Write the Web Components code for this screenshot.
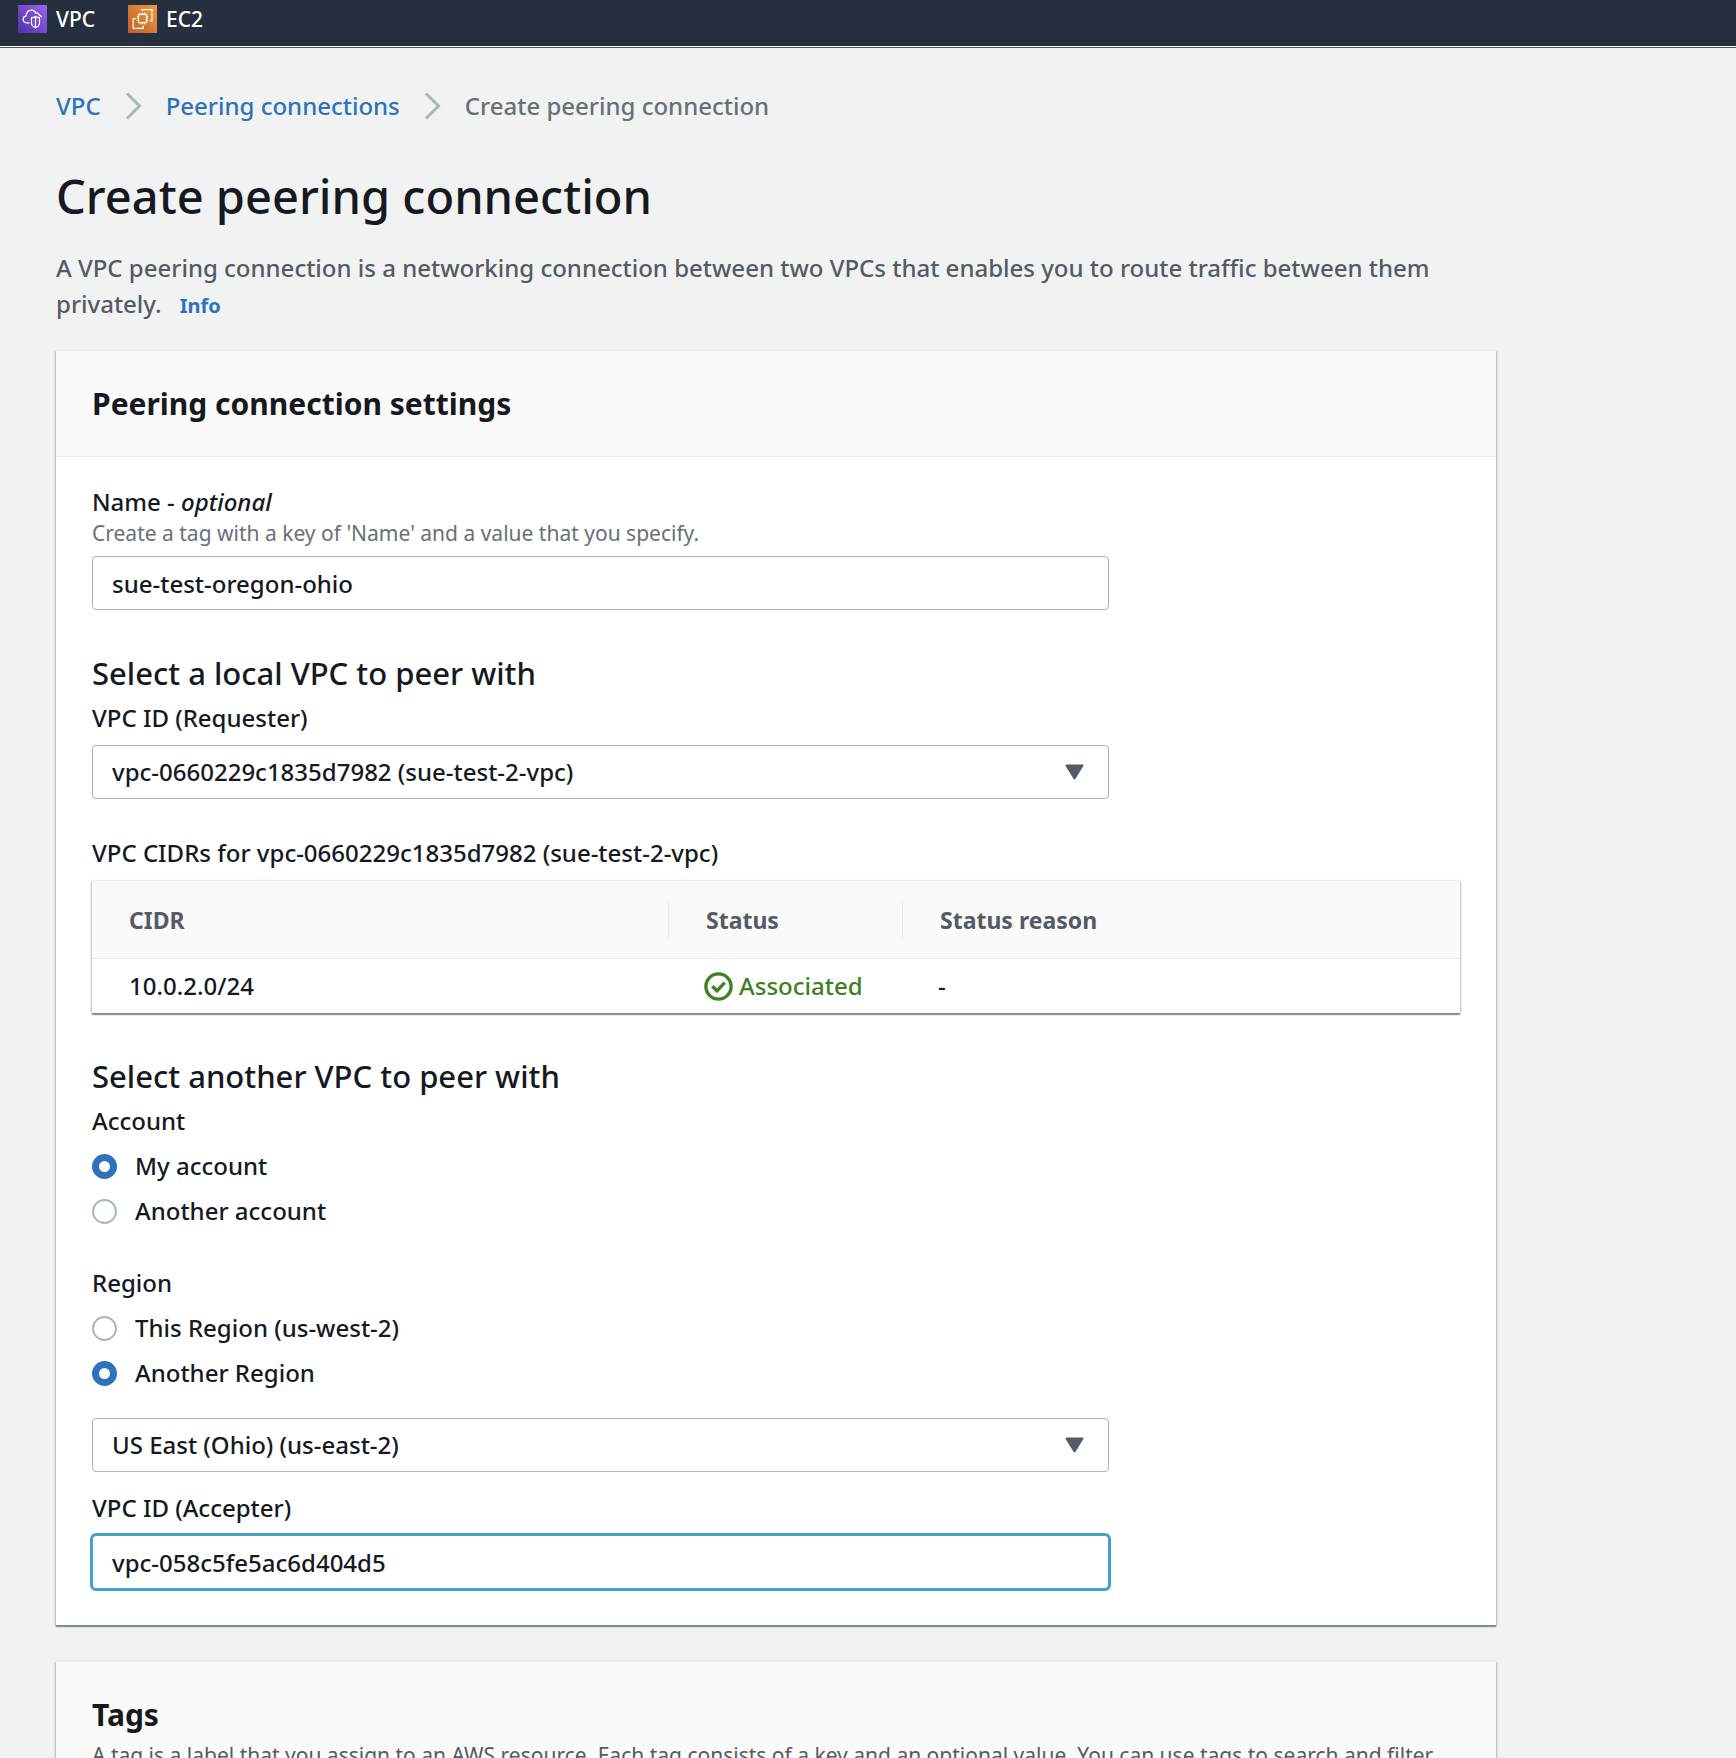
<!DOCTYPE html>
<html lang="en">
<head>
<meta charset="utf-8">
<meta name="viewport" content="width=device-width, initial-scale=1">
<title>Create peering connection</title>
<style>
  :root {
    --text: #16191f;
    --text-secondary: #545b64;
    --text-hint: #687078;
    --link: #2f72ba;
    --line: #eaeded;
    --control-border: #aab7b8;
    --surface: #ffffff;
    --surface-header: #fafafa;
    --success: #3e8022;
    --focus: #459fc6;
    --card-shadow: 0 2px 1px rgba(0, 28, 36, .34), 1px 1px 2px rgba(0, 28, 36, .22), -1px 1px 2px rgba(0, 28, 36, .22);
  }
  html { background: #f1f3f3; }
  body {
    margin: 0;
    color: var(--text);
    font: 500 24px/36px "Noto Sans", "Open Sans", sans-serif;
  }
</style>
</head>
<body>
<peering-page></peering-page>

<script>
const define = (name, html, setup) => {
  const template = document.createElement('template');
  template.innerHTML = html;
  customElements.define(name, class extends HTMLElement {
    connectedCallback() {
      if (this.shadowRoot) return;
      const root = this.attachShadow({ mode: 'open' });
      root.append(template.content.cloneNode(true));
      if (setup) setup(this, root);
    }
  });
};

define('service-link', `
<style>
  :host { display: block; }
  a { display: flex; align-items: center; gap: 9px; color: #fff; text-decoration: none; font-size: 21px; line-height: 28px; }
  ::slotted(svg) { display: block; }
</style>
<a href="#"><slot name="icon"></slot><span><slot></slot></span></a>`);

define('service-bar', `
<style>
  :host { display: block; background: #262f3e; border-bottom: 1px solid #50565f; }
  nav { display: flex; gap: 33px; padding: 5px 18px 13px; border-bottom: 1px solid #fff; }
</style>
<nav aria-label="Favorites"><slot></slot></nav>`);

define('bread-crumbs', `
<style>
  :host { display: block; }
  ol { display: flex; align-items: center; gap: 24px; list-style: none; margin: 0; padding: 0; }
  li { display: flex; align-items: center; gap: 24px; }
  a { color: var(--link); text-decoration: none; }
  .current { color: var(--text-hint); }
  svg { display: block; }
</style>
<ol></ol>`, (host, root) => {
  const items = host.getAttribute('items').split('|');
  root.querySelector('ol').innerHTML = items.map((t, i) => i < items.length - 1
    ? `<li><a href="#">${t}</a><svg width="17" height="28" viewBox="0 0 17 28" fill="none" stroke="#aab7b8" stroke-width="3" aria-hidden="true"><path d="M2 1.5 14.5 14 2 26.5"/></svg></li>`
    : `<li class="current" aria-current="page">${t}</li>`).join('');
});

define('page-header', `
<style>
  :host { display: block; }
  h1 { margin: 0 0 24px; font-size: 47px; line-height: 60px; font-weight: 500; }
  p { margin: 0; color: var(--text-secondary); }
  a { display: inline-block; margin-left: 12px; color: var(--link); font-size: 20px; line-height: 28px; font-weight: 700; text-decoration: none; }
</style>
<h1><slot name="title"></slot></h1>
<p><slot></slot> <a href="#">Info</a></p>`);

define('panel-card', `
<style>
  :host { display: block; background: var(--surface); border-top: 1px solid var(--line); box-shadow: var(--card-shadow); }
  header { padding: 33px 36px 32px; background: var(--surface-header); border-bottom: 1px solid var(--line); }
  h2 { margin: 0; font-size: 30px; line-height: 40px; font-weight: 700; }
  ::slotted([slot="description"]) { margin: 6px 0 0; color: var(--text-secondary); font-size: 21px; line-height: 28px; font-weight: 400; }
  .body { padding: 27px 36px 36px; }
</style>
<section>
  <header><h2><slot name="title"></slot></h2><slot name="description"></slot></header>
  <div class="body"><slot></slot></div>
</section>`);

define('section-heading', `
<style>
  :host { display: block; }
  h3 { margin: 0; font-size: 31px; line-height: 36px; font-weight: 500; }
</style>
<h3><slot></slot></h3>`);

define('text-field', `
<style>
  :host { display: block; width: calc(75% - 9px); }
  label { display: block; }
  .hint { color: var(--text-hint); font-size: 21px; line-height: 27px; font-weight: 400; }
  .hint:empty { display: none; }
  input { display: block; box-sizing: border-box; width: 100%; height: 54px; margin: 9px 0 0; padding: 0 19px; border: 1px solid var(--control-border); border-radius: 4px; background: #fff; color: inherit; font: inherit; outline: none; }
  :host([active]) input { border-color: var(--focus); box-shadow: 0 0 0 2px var(--focus); }
</style>
<label for="field"><slot name="label"></slot></label>
<div class="hint" id="hint"></div>
<input id="field" type="text" aria-describedby="hint">`, (host, root) => {
  root.querySelector('.hint').textContent = host.getAttribute('hint') || '';
  root.querySelector('input').value = host.getAttribute('value') || '';
});

define('select-field', `
<style>
  :host { display: block; width: calc(75% - 9px); }
  label { display: block; margin-bottom: 9px; }
  .box { display: grid; align-items: center; }
  select, svg { grid-area: 1 / 1; }
  select { appearance: none; box-sizing: border-box; width: 100%; height: 54px; margin: 0; padding: 0 60px 0 19px; border: 1px solid var(--control-border); border-radius: 4px; background: #fff; color: inherit; font: inherit; }
  svg { justify-self: end; margin-right: 25px; pointer-events: none; }
</style>
<label for="field"></label>
<div class="box">
  <select id="field"><option></option></select>
  <svg width="19" height="16" viewBox="0 0 19 16" aria-hidden="true"><path d="M1.5 1.5h16l-8 13z" fill="#545b64" stroke="#545b64" stroke-width="2" stroke-linejoin="round"/></svg>
</div>`, (host, root) => {
  const label = root.querySelector('label');
  if (host.hasAttribute('label')) label.textContent = host.getAttribute('label');
  else { label.remove(); root.querySelector('select').setAttribute('aria-label', host.getAttribute('name')); }
  root.querySelector('option').textContent = host.getAttribute('value');
});

define('radio-group', `
<style>
  :host { display: block; }
  fieldset { margin: 0; padding: 0; border: 0; min-width: 0; }
  legend { padding: 0; }
  .choice { display: flex; align-items: center; gap: 18px; margin-top: 9px; }
  input { appearance: none; box-sizing: border-box; flex: none; width: 25px; height: 25px; margin: 0; border: 2px solid var(--control-border); border-radius: 50%; background: #fff; }
  input:checked { border: 7px solid var(--link); }
</style>
<fieldset><legend></legend></fieldset>`, (host, root) => {
  const selected = Number(host.getAttribute('selected'));
  root.querySelector('legend').textContent = host.getAttribute('label');
  root.querySelector('fieldset').insertAdjacentHTML('beforeend',
    host.getAttribute('options').split('|').map((t, i) =>
      `<div class="choice"><input type="radio" name="choice" id="choice${i}"${i === selected ? ' checked' : ''}><label for="choice${i}">${t}</label></div>`).join(''));
});

define('status-label', `
<style>
  :host { display: flex; align-items: center; gap: 6px; color: var(--success); }
</style>
<svg width="29" height="29" viewBox="0 0 29 29" fill="none" stroke="currentColor" stroke-width="3.4" aria-hidden="true"><circle cx="14.5" cy="14.5" r="12.6"/><path d="M8.3 14.3 13 18.8 20.7 10.6"/></svg>
<span><slot></slot></span>`);

define('cidr-table', `
<style>
  :host { display: block; }
  table { width: 100%; table-layout: fixed; border-collapse: separate; border-spacing: 0; border-top: 1px solid var(--line); box-shadow: var(--card-shadow); }
  caption { padding-bottom: 9px; text-align: left; }
  th, td { padding: 0 0 0 37px; text-align: left; }
  th { height: 77px; background: var(--surface-header); border-bottom: 1px solid var(--line); color: var(--text-secondary); font-weight: 700; font-size: 23px; }
  th div { border-right: 1px solid var(--line); }
  th:last-child div { border: 0; }
  td { height: 54px; padding-left: 35px; background: var(--surface); }
  td:first-child { padding-left: 37px; }
  th:first-child { width: 540px; }
  th:nth-child(2) { width: 197px; }
</style>
<table>
  <caption><slot></slot></caption>
  <thead><tr><th scope="col"><div>CIDR</div></th><th scope="col"><div>Status</div></th><th scope="col"><div>Status reason</div></th></tr></thead>
  <tbody><tr><td>10.0.2.0/24</td><td><status-label>Associated</status-label></td><td>-</td></tr></tbody>
</table>`);

define('peering-page', `
<style>
  :host { display: block; height: 100vh; overflow: hidden; }
  main { max-width: 1440px; padding: 40px 56px; }
  page-header { margin: 42px 0 28px; }
  .form { display: flex; flex-direction: column; }
  section-heading { margin: 45px 0 9px; }
  cidr-table, .region { margin-top: 36px; }
  .region-select { margin-top: 27px; }
  .accepter { margin-top: 18px; }
  panel-card + panel-card { margin-top: 36px; }
</style>
<service-bar>
  <service-link>
    <svg slot="icon" width="29" height="28" viewBox="0 0 29 28" aria-hidden="true">
      <defs><linearGradient id="vpc" x1="0" y1="1" x2="1" y2="0"><stop stop-color="#4f2fa8"/><stop offset="1" stop-color="#9a66f0"/></linearGradient></defs>
      <rect width="29" height="28" fill="url(#vpc)"/>
      <g fill="none" stroke="#fff" stroke-width="1.2" stroke-linejoin="round">
        <path d="M11.500 17.800H8.600C6.600 17.800 5.200 16.300 5.200 14.300c0-2 1.300-3.200 3-3.500C8.100 7.500 10.300 5.200 13.300 5.200c2.400 0 4 1.300 4.800 3.300 1.500-.9 3.200 0 3.300 1.900 1.100.3 1.900.8 2.300 1.600"/>
        <path d="M17.500 11.500c1.100.9 2.400 1.200 4 1.200v5.400c0 2.200-1.500 3.700-4 4.600-2.500-.9-4-2.400-4-4.600v-5.400c1.600 0 2.900-.3 4-1.200zM17.500 11.500v11.200"/>
      </g>
    </svg>VPC</service-link>
  <service-link>
    <svg slot="icon" width="29" height="28" viewBox="0 0 29 28" aria-hidden="true">
      <defs><linearGradient id="ec2" x1="0" y1="1" x2="1" y2="0"><stop stop-color="#c0602e"/><stop offset="1" stop-color="#ef9a3a"/></linearGradient></defs>
      <rect width="29" height="28" fill="url(#ec2)"/>
      <g fill="none" stroke="#fff" stroke-width="1.200">
        <rect x="10.500" y="9.500" width="8" height="8"/>
        <path d="M12.500 9.500V7.800M14.500 9.500V7.800M16.500 9.500V7.800M12.500 19.200v-1.700M14.500 19.200v-1.700M16.500 19.200v-1.700M10.500 11.500H8.800M10.500 13.500H8.800M10.500 15.500H8.800M18.500 11.500h1.700M18.500 13.500h1.700M18.500 15.500h1.700"/>
        <path d="M14 6V4.600h10v11.200h-2M8 13.500H5.200v9.800h10V20.800"/>
      </g>
    </svg>EC2</service-link>
</service-bar>
<main>
  <bread-crumbs items="VPC|Peering connections|Create peering connection"></bread-crumbs>
  <page-header><span slot="title">Create peering connection</span>A VPC peering connection is a networking connection between two VPCs that enables you to route traffic between them <span>privately.</span></page-header>
  <panel-card>
    <span slot="title">Peering connection settings</span>
    <form class="form">
      <text-field value="sue-test-oregon-ohio" hint="Create a tag with a key of 'Name' and a value that you specify."><span slot="label">Name - <i>optional</i></span></text-field>
      <section-heading>Select a local VPC to peer with</section-heading>
      <select-field label="VPC ID (Requester)" value="vpc-0660229c1835d7982 (sue-test-2-vpc)"></select-field>
      <cidr-table>VPC CIDRs for vpc-0660229c1835d7982 (sue-test-2-vpc)</cidr-table>
      <section-heading>Select another VPC to peer with</section-heading>
      <radio-group label="Account" options="My account|Another account" selected="0"></radio-group>
      <radio-group class="region" label="Region" options="This Region (us-west-2)|Another Region" selected="1"></radio-group>
      <select-field class="region-select" name="Region" value="US East (Ohio) (us-east-2)"></select-field>
      <text-field class="accepter" active value="vpc-058c5fe5ac6d404d5"><span slot="label">VPC ID (Accepter)</span></text-field>
    </form>
  </panel-card>
  <panel-card>
    <span slot="title">Tags</span>
    <p slot="description">A tag is a label that you assign to an AWS resource. Each tag consists of a key and an optional value. You can use tags to search and filter</p>
  </panel-card>
</main>`);
</script>
</body>
</html>
